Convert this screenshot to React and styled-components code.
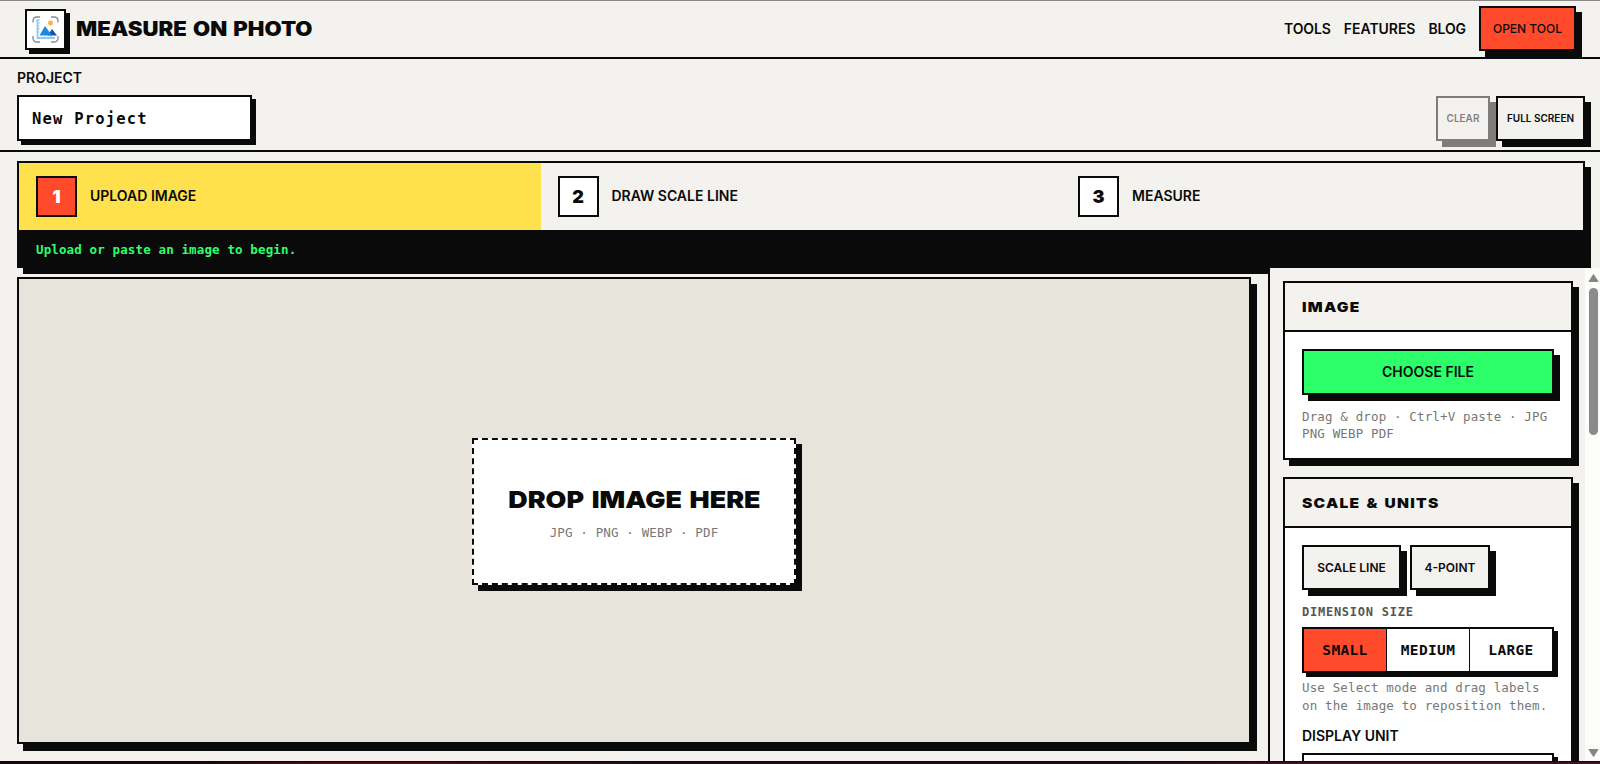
import React from "react";
import styled, { createGlobalStyle, css } from "styled-components";

const ink = "#0a0a0a";
const paper = "#f4f2ee";
const red = "#ff4b2b";

const Global = createGlobalStyle`
  * { box-sizing: border-box; }
  body { margin: 0; background: ${paper}; overflow: hidden; }
`;

const sans = css`font-family: Inter, "Liberation Sans", sans-serif;`;
const mono = css`font-family: "DejaVu Sans Mono", "Liberation Mono", monospace;`;

const Page = styled.div`
  ${sans}
  height: 764px;
  display: flex;
  flex-direction: column;
  background: ${paper};
  color: ${ink};
  border-top: 1px solid #8c8888;
  white-space: nowrap;
`;

const Header = styled.header`
  height: 58px;
  flex: none;
  display: flex;
  justify-content: space-between;
  align-items: center;
  padding: 0 24px 0 25px;
  border-bottom: 2px solid ${ink};
`;

const Brand = styled.div`
  display: flex;
  align-items: center;
  gap: 10px;
`;

const LogoBox = styled.div`
  width: 41px;
  height: 41px;
  border: 2px solid ${ink};
  background: #fff;
  box-shadow: 4px 4px 0 ${ink};
  display: flex;
  align-items: center;
  justify-content: center;
`;

const BrandName = styled.span`
  font-size: 19.5px;
  line-height: 24px;
  font-weight: 900;
  word-spacing: 1.5px;
  transform: scaleX(1.136);
  transform-origin: left;
`;

const Nav = styled.nav`
  display: flex;
  align-items: center;
  gap: 13px;
  padding-bottom: 1px;
`;

const Label = styled.span`
  font-size: 14px;
  line-height: 18px;
  font-weight: 600;
  letter-spacing: ${(p) => p.$track || 0}px;
`;

const Button = styled.button`
  ${sans}
  flex: none;
  width: ${(p) => p.$width};
  height: ${(p) => p.$height || 45}px;
  padding: 0 0 ${(p) => p.$lift || 0}px;
  border: 2px solid ${ink};
  border-radius: 0;
  background: ${(p) => p.$fill || paper};
  color: ${ink};
  box-shadow: 6px 6px 0 ${ink};
  font-size: ${(p) => p.$size || 12}px;
  font-weight: ${(p) => p.$weight || 600};
  letter-spacing: ${(p) => p.$track || 0}px;
  opacity: ${(p) => (p.disabled ? 0.5 : 1)};
`;

const ProjectBar = styled.section`
  height: 93px;
  flex: none;
  display: flex;
  justify-content: space-between;
  padding: 10px 15px 0 17px;
  border-bottom: 2px solid ${ink};
`;

const Field = styled.div`
  display: flex;
  flex-direction: column;
  gap: 8px;
`;

const ProjectInput = styled.input`
  ${mono}
  width: 235px;
  height: 46px;
  padding: 1px 13px 0;
  border: 2px solid ${ink};
  border-radius: 0;
  background: #fff;
  color: ${ink};
  box-shadow: 4px 4px 0 ${ink};
  font-size: 15.5px;
  font-weight: 700;
  letter-spacing: 1.2px;
`;

const Actions = styled.div`
  display: flex;
  gap: 6px;
  padding-top: 27px;
`;

const Steps = styled.section`
  flex: none;
  height: 107px;
  margin: 9px 15px 0 17px;
  border: 2px solid ${ink};
  background: ${ink};
  box-shadow: 6px 6px 0 ${ink};
`;

const StepRow = styled.div`
  height: 67px;
  display: grid;
  grid-template-columns: 521.5px 520.5px 1fr;
  background: ${paper};
`;

const Step = styled.div`
  display: flex;
  align-items: center;
  gap: 13px;
  padding-left: 17px;
  background: ${(p) => (p.$active ? "#ffe14d" : paper)};
`;

const StepLabel = styled(Label)`
  padding-bottom: 2px;
`;

const StepNumber = styled.div`
  width: 41px;
  height: 41px;
  padding-bottom: 1px;
  border: 2px solid ${ink};
  background: ${(p) => (p.$active ? red : "#fff")};
  color: ${(p) => (p.$active ? "#fff" : ink)};
  display: flex;
  align-items: center;
  justify-content: center;
  font-size: 18px;
  font-weight: 900;
`;

const Status = styled.div`
  ${mono}
  height: 36px;
  padding-left: 17px;
  line-height: 40px;
  color: #2dff6a;
  font-size: 12.5px;
  font-weight: 700;
  letter-spacing: 0.13px;
`;

const Workspace = styled.main`
  flex: 1;
  min-height: 0;
  display: flex;
`;

const CanvasArea = styled.section`
  flex: 1;
  padding: 9px 17px 17px 17px;
`;

const Canvas = styled.div`
  height: 100%;
  border: 2px solid ${ink};
  background: #e6e4db;
  box-shadow: 6px 7px 0 ${ink};
  display: flex;
  align-items: center;
  justify-content: center;
`;

const DropZone = styled.div`
  width: 324px;
  height: 147px;
  margin-top: 2px;
  padding-top: 2px;
  border: 2px dashed ${ink};
  background: #fff;
  box-shadow: 6px 6px 0 ${ink};
  display: flex;
  flex-direction: column;
  align-items: center;
  justify-content: center;
  gap: 9px;
`;

const DropTitle = styled.div`
  font-size: 23.5px;
  line-height: 30px;
  font-weight: 900;
  word-spacing: 2px;
  transform: scaleX(1.143);
`;

const Note = styled.p`
  ${mono}
  margin: ${(p) => p.$top || 0}px 0 0;
  font-size: 12.5px;
  line-height: ${(p) => p.$leading || 17}px;
  letter-spacing: 0.14px;
  color: #777;
`;

const Sidebar = styled.aside`
  width: 332px;
  border-left: 2px solid ${ink};
  background: ${paper};
  display: flex;
  position: relative;
  z-index: 1;
`;

const Cards = styled.div`
  flex: 1;
  min-width: 0;
  overflow: hidden;
  padding: 13px 12px 0 13px;
  display: flex;
  flex-direction: column;
  gap: 17px;
`;

const Scrollbar = styled.div`
  width: 15px;
  background: #fcfcfb;
  padding: 6px 2px 4px 3px;
  display: flex;
  flex-direction: column;
  align-items: center;
`;

const Thumb = styled.div`
  width: 9px;
  height: 147px;
  margin: 6px 0 auto;
  border-radius: 5px;
  background: #8b8b8b;
`;

const Card = styled.section`
  flex: none;
  height: ${(p) => p.$height}px;
  border: 2px solid ${ink};
  background: #fff;
  box-shadow: 6px 6px 0 ${ink};
`;

const CardTitle = styled.h2`
  margin: 0;
  height: 49px;
  padding-left: 17px;
  border-bottom: 2px solid ${ink};
  background: ${paper};
  font-size: 13.5px;
  line-height: 48px;
  font-weight: 900;

  span {
    display: inline-block;
    letter-spacing: 1.1px;
    word-spacing: 1.5px;
    transform: scaleX(1.15);
    transform-origin: left;
  }
`;

const CardBody = styled.div`
  padding: 17px 17px 0;
  display: flex;
  flex-direction: column;
`;

const ButtonPair = styled.div`
  display: flex;
  gap: 9px;
`;

const SizeLabel = styled.div`
  ${mono}
  margin-top: 13px;
  line-height: 18px;
  font-size: 12px;
  font-weight: 700;
  letter-spacing: 0.75px;
  color: #555;
`;

const Segments = styled.div`
  display: grid;
  grid-template-columns: 82px 83px 83px;
  height: 46px;
  margin: 6px 0 6px;
  border: 2px solid ${ink};
  box-shadow: 4px 4px 0 ${ink};
`;

const Segment = styled.div`
  ${mono}
  display: flex;
  align-items: center;
  justify-content: center;
  padding-bottom: 1px;
  background: ${(p) => (p.$active ? red : "#fff")};
  font-size: 14.5px;
  font-weight: 700;
  letter-spacing: 0.35px;
  & + & { border-left: 1px solid ${ink}; }
`;

const UnitLabel = styled(Label)`
  margin: 13px 0 8px;
`;

const UnitSelect = styled.div`
  height: 46px;
  border: 2px solid ${ink};
  box-shadow: 4px 4px 0 ${ink};
`;

const BottomEdge = styled.footer`
  flex: none;
  height: 3px;
  border-top: 1px solid ${ink};
  background: linear-gradient(90deg, #14090d 0%, #14090d 12%, #4a0a18 20%, #4a0a18 27%, #1d0d16 40%, #1d0d16 70%, #430f22 82%, #430f22 100%);
  position: relative;
  z-index: 2;
`;

function Logo() {
  return (
    <svg width="29" height="29" viewBox="0 0 29 29" fill="none">
      <path d="M2 7.5V6Q2 2 6 2H9M20 2h3q4 0 4 4v1.5M27 21v2q0 4-4 4h-3M9 27H6q-4 0-4-4v-2" stroke="#858a91" strokeWidth="1.3" />
      <path d="M6.5 4.5V23H24" stroke="#8dcbed" strokeWidth="1.8" />
      <path d="M5 5h4M7 8h2M7 11h1.5M7 14h2M7 17h1.5M11 23v-1.5M14 23v-2M17 23v-1.5M20 23v-2" stroke="#7ec3ea" strokeWidth="0.8" />
      <path d="M16.5 20.5l4.5-6.5 5 6.5z" fill="#204eb0" />
      <path d="M8.5 20.5L14 11l7 9.5z" fill="#168bdf" />
      <circle cx="19.5" cy="8" r="2.4" fill="#ffae35" />
    </svg>
  );
}

function Arrow({ down }) {
  return (
    <svg width="11" height="8" viewBox="0 0 11 8">
      <path d={down ? "M1 .5h9L5.5 7.5z" : "M1 7.5h9L5.5.5z"} fill="#858585" stroke="#858585" strokeLinejoin="round" />
    </svg>
  );
}

const steps = ["UPLOAD IMAGE", "DRAW SCALE LINE", "MEASURE"];

export default function App() {
  return (
    <>
      <Global />
      <Page>
        <Header>
          <Brand>
            <LogoBox><Logo /></LogoBox>
            <BrandName>MEASURE ON PHOTO</BrandName>
          </Brand>
          <Nav>
            <Label $track={-0.1}>TOOLS</Label>
            <Label $track={-0.05}>FEATURES</Label>
            <Label $track={-0.1}>BLOG</Label>
            <Button $width="97px" $fill={red} $weight={500}>OPEN TOOL</Button>
          </Nav>
        </Header>
        <ProjectBar>
          <Field>
            <Label>PROJECT</Label>
            <ProjectInput defaultValue="New Project" />
          </Field>
          <Actions>
            <Button $width="54px" $size={10} $lift={1} disabled>CLEAR</Button>
            <Button $width="89px" $size={10} $lift={1}>FULL SCREEN</Button>
          </Actions>
        </ProjectBar>
        <Steps>
          <StepRow>
            {steps.map((name, i) => (
              <Step key={name} $active={i === 0}>
                <StepNumber $active={i === 0}>{i + 1}</StepNumber>
                <StepLabel>{name}</StepLabel>
              </Step>
            ))}
          </StepRow>
          <Status>Upload or paste an image to begin.</Status>
        </Steps>
        <Workspace>
          <CanvasArea>
            <Canvas>
              <DropZone>
                <DropTitle>DROP IMAGE HERE</DropTitle>
                <Note>JPG · PNG · WEBP · PDF</Note>
              </DropZone>
            </Canvas>
          </CanvasArea>
          <Sidebar>
            <Cards>
              <Card $height={179}>
                <CardTitle><span>IMAGE</span></CardTitle>
                <CardBody>
                  <Button $width="100%" $height={46} $size={14} $lift={2} $fill="#2dff6a">CHOOSE FILE</Button>
                  <Note $top={13}>Drag &amp; drop · Ctrl+V paste · JPG<br />PNG WEBP PDF</Note>
                </CardBody>
              </Card>
              <Card $height={360}>
                <CardTitle><span>SCALE &amp; UNITS</span></CardTitle>
                <CardBody>
                  <ButtonPair>
                    <Button $width="99px">SCALE LINE</Button>
                    <Button $width="80px">4-POINT</Button>
                  </ButtonPair>
                  <SizeLabel>DIMENSION SIZE</SizeLabel>
                  <Segments>
                    <Segment $active>SMALL</Segment>
                    <Segment>MEDIUM</Segment>
                    <Segment>LARGE</Segment>
                  </Segments>
                  <Note $leading={17.5}>Use Select mode and drag labels<br />on the image to reposition them.</Note>
                  <UnitLabel>DISPLAY UNIT</UnitLabel>
                  <UnitSelect />
                </CardBody>
              </Card>
            </Cards>
            <Scrollbar>
              <Arrow />
              <Thumb />
              <Arrow down />
            </Scrollbar>
          </Sidebar>
        </Workspace>
        <BottomEdge />
      </Page>
    </>
  );
}
